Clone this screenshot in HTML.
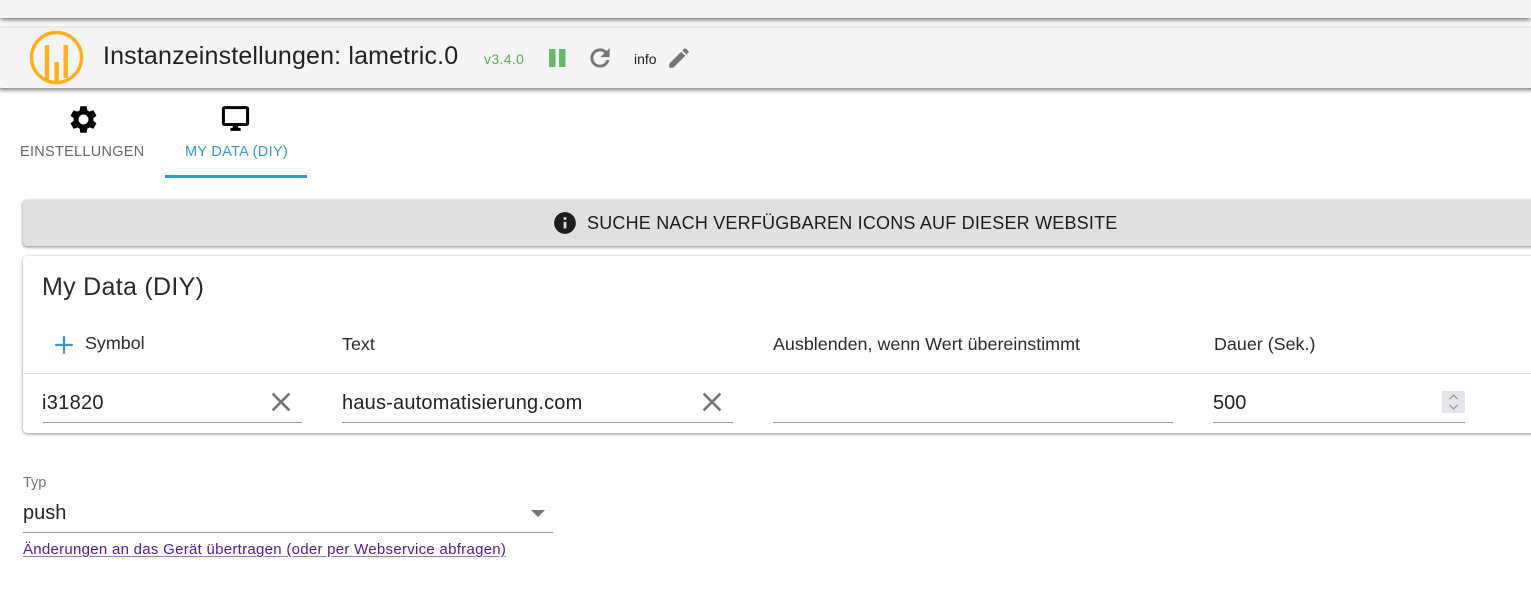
<!DOCTYPE html>
<html><head><meta charset="utf-8"><style>
html,body{margin:0;padding:0;background:#fff}
body{width:1531px;height:610px;overflow:hidden;position:relative;font-family:"Liberation Sans",sans-serif;color:rgba(0,0,0,.87)}
.a{position:absolute;white-space:nowrap}
svg{position:absolute;display:block}
.ul{position:absolute;height:1px;background:#949494}
.th{font-size:17.900px;line-height:20px;color:#2a2a2a;top:334px}
.td{font-size:20px;line-height:24px;color:#222;top:391px}
</style></head><body>
<div class="a" style="left:0;top:0;width:1531px;height:18px;background:#f5f5f5;box-shadow:0 2px 5px rgba(0,0,0,.55)"></div>
<div class="a" style="left:-2px;top:27px;width:1540px;height:61px;background:#f4f4f4;border-radius:4px;border-top:1px solid #e6e6e6;box-sizing:border-box;box-shadow:0 2px 5px rgba(0,0,0,.55)"></div>

<svg style="left:29px;top:30px" width="56" height="56" viewBox="0 0 56 56"><circle cx="27.500" cy="27.500" r="25" fill="none" stroke="#ffae1c" stroke-width="3.400"/><path d="M18 15V50M27.700 32V51M36.700 15V48" fill="none" stroke="#ffae1c" stroke-width="4.400"/></svg>
<div class="a" style="left:103px;top:41px;font-size:25px;line-height:30px;letter-spacing:.16px;color:#222">Instanzeinstellungen: lametric.0</div>
<div class="a" style="left:484px;top:51px;font-size:14px;line-height:16px;color:#5ba85f;letter-spacing:.35px">v3.4.0</div>
<svg style="left:549px;top:49px" width="17" height="18"><path d="M0 0h6.500v18H0zM10 0h6.500v18H10z" fill="#66bb6a"/></svg>
<svg style="left:586px;top:44px" width="28" height="28" viewBox="0 0 24 24"><path fill="#757575" stroke="#757575" stroke-width=".5" d="M17.650 6.350C16.200 4.900 14.210 4 12 4c-4.420 0-7.990 3.580-7.990 8s3.570 8 7.990 8c3.730 0 6.840-2.550 7.730-6h-2.080c-.82 2.330-3.040 4-5.650 4-3.310 0-6-2.690-6-6s2.690-6 6-6c1.660 0 3.140.69 4.220 1.780L13 11h7V4l-2.350 2.350z"/></svg>
<div class="a" style="left:634px;top:51px;font-size:14px;line-height:16px;color:#222">info</div>
<svg style="left:666px;top:45px" width="26" height="26" viewBox="0 0 24 24"><path fill="#757575" d="M3 17.250V21h3.750L17.810 9.940l-3.750-3.750L3 17.250zM20.710 7.040c.39-.39.39-1.020 0-1.410l-2.340-2.340c-.39-.39-1.020-.39-1.410 0l-1.830 1.830 3.750 3.750 1.830-1.830z"/></svg>

<svg style="left:66.500px;top:102.500px" width="33" height="33" viewBox="0 0 24 24"><path fill="#000" d="M19.140 12.940c.04-.3.060-.61.060-.94 0-.32-.02-.64-.07-.94l2.030-1.580c.18-.14.230-.41.120-.61l-1.920-3.320c-.12-.22-.37-.29-.59-.22l-2.390.96c-.5-.38-1.030-.7-1.620-.94l-.36-2.540c-.04-.24-.24-.41-.48-.41h-3.840c-.24 0-.43.170-.47.410l-.36 2.540c-.59.24-1.130.57-1.620.94l-2.390-.96c-.22-.08-.47 0-.59.22L2.740 8.870c-.12.210-.08.470.12.610l2.030 1.580c-.05.300-.09.630-.09.940s.02.640.07.940l-2.030 1.580c-.18.140-.23.410-.12.610l1.920 3.320c.12.220.37.290.59.220l2.390-.96c.5.380 1.030.7 1.620.94l.36 2.540c.05.240.24.410.48.410h3.840c.24 0 .44-.17.470-.41l.36-2.540c.59-.24 1.130-.56 1.620-.94l2.390.96c.22.080.47 0 .59-.22l1.920-3.320c.12-.22.07-.47-.12-.61l-2.010-1.580zM12 15.600c-1.980 0-3.600-1.620-3.600-3.600s1.620-3.600 3.600-3.600 3.600 1.620 3.600 3.600-1.620 3.600-3.600 3.600z"/></svg>
<svg style="left:221px;top:104px" width="29" height="29" viewBox="0 0 24 24"><path fill="#000" stroke="#000" stroke-width=".5" d="M21 2H3c-1.100 0-2 .9-2 2v12c0 1.100.9 2 2 2h7v2H8v2h8v-2h-2v-2h7c1.100 0 2-.9 2-2V4c0-1.100-.9-2-2-2zm0 14H3V4h18v12z"/></svg>
<div class="a" style="left:20px;top:144px;font-size:14.500px;line-height:16px;letter-spacing:.28px;color:#666">EINSTELLUNGEN</div>
<div class="a" style="left:185px;top:144px;font-size:14.500px;line-height:16px;letter-spacing:.3px;color:#3399cc">MY DATA (DIY)</div>
<div class="a" style="left:165px;top:175px;width:142px;height:3px;background:#3399cc"></div>

<div class="a" style="left:23px;top:200px;width:1520px;height:46px;background:#e0e0e0;border-radius:4px;box-shadow:0 1px 3px rgba(0,0,0,.5)"></div>
<svg style="left:552px;top:210px" width="26" height="26" viewBox="0 0 24 24"><path fill="#1c1c1c" d="M12 2C6.480 2 2 6.480 2 12s4.480 10 10 10 10-4.480 10-10S17.520 2 12 2zm1.300 15h-2.600v-6h2.600v6zm0-8h-2.600V6.700h2.600V9z"/></svg>
<div class="a" style="left:587px;top:213px;font-size:18px;line-height:20px;letter-spacing:.2px;color:#1c1c1c">SUCHE NACH VERFÜGBAREN ICONS AUF DIESER WEBSITE</div>

<div class="a" style="left:23px;top:256px;width:1520px;height:177px;background:#fff;border-radius:4px;box-shadow:0 1px 3px rgba(0,0,0,.45)"></div>
<div class="a" style="left:42px;top:272px;font-size:25px;line-height:30px;color:#2a2a2a;letter-spacing:.3px">My Data (DIY)</div>
<svg style="left:49px;top:330px" width="30" height="30" viewBox="0 0 24 24"><path fill="#3399cc" d="M19 12.900h-6.100V19h-1.800v-6.100H5v-1.800h6.100V5h1.800v6.100H19z"/></svg>
<div class="a th" style="left:85px;top:333px">Symbol</div>
<div class="a th" style="left:342px">Text</div>
<div class="a th" style="left:773px">Ausblenden, wenn Wert übereinstimmt</div>
<div class="a th" style="left:1214px">Dauer (Sek.)</div>
<div class="a" style="left:23px;top:373px;width:1508px;height:1px;background:#e0e0e0"></div>

<div class="a td" style="left:42px;letter-spacing:.3px">i31820</div>
<svg style="left:265px;top:386px" width="32" height="32" viewBox="0 0 24 24"><path fill="#757575" d="M19 6.410L17.590 5 12 10.590 6.410 5 5 6.410 10.590 12 5 17.590 6.410 19 12 13.410 17.590 19 19 17.590 13.410 12z"/></svg>
<div class="ul" style="left:43px;top:422px;width:259px"></div>
<div class="a td" style="left:342px;letter-spacing:.2px">haus-automatisierung.com</div>
<svg style="left:696px;top:386px" width="32" height="32" viewBox="0 0 24 24"><path fill="#757575" d="M19 6.410L17.590 5 12 10.590 6.410 5 5 6.410 10.590 12 5 17.590 6.410 19 12 13.410 17.590 19 19 17.590 13.410 12z"/></svg>
<div class="ul" style="left:342px;top:422px;width:391px"></div>
<div class="ul" style="left:773px;top:422px;width:400px"></div>
<div class="a td" style="left:1213px">500</div>
<div class="a" style="left:1442px;top:391px;width:23px;height:22px;background:#e4e4ea"></div>
<svg style="left:1442px;top:391px" width="23" height="22"><path d="M7.500 8l4-4 4 4M7.500 14l4 4 4-4" fill="none" stroke="#9a9aa0" stroke-width="1.300"/></svg>
<div class="ul" style="left:1213px;top:422px;width:252px"></div>

<div class="a" style="left:23px;top:475px;font-size:14.500px;line-height:16px;color:#777">Typ</div>
<div class="a" style="left:23px;top:501px;font-size:20px;line-height:24px;color:#222">push</div>
<svg style="left:531px;top:510px" width="14" height="7"><path d="M0 0h14L7 7z" fill="#757575"/></svg>
<div class="ul" style="left:23px;top:532px;width:530px"></div>
<div class="a" style="left:23px;top:542px;font-size:15px;line-height:16px;color:#551a8b;text-decoration:underline;text-decoration-color:#9a78bd;text-underline-offset:2px;letter-spacing:.28px">Änderungen an das Gerät übertragen (oder per Webservice abfragen)</div>
</body></html>
